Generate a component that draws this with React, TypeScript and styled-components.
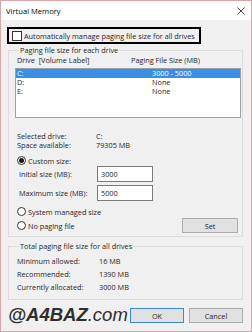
import React from 'react';
import styled, { createGlobalStyle } from 'styled-components';

const GlobalStyle = createGlobalStyle`
  html, body {
    margin: 0;
    padding: 0;
    background: #ffffff;
  }
  * {
    box-sizing: border-box;
  }
`;

const Window = styled.div`
  position: relative;
  width: 252px;
  height: 332px;
  border: 1px solid #d9a4aa;
  display: flex;
  flex-direction: column;
  font-family: 'Open Sans', 'Noto Sans', sans-serif;
  font-size: 7.3px;
  color: #1f1f1f;
  overflow: hidden;
`;

const TitleBar = styled.div`
  height: 19px;
  flex-shrink: 0;
  background: #ffffff;
  display: flex;
  align-items: center;
  justify-content: space-between;
  padding: 0 6px 0 5px;
`;

const Title = styled.span`
  font-size: 7.6px;
  color: #000000;
`;

const Body = styled.div`
  flex: 1;
  background: #f0f0f0;
  padding: 0 8px 0 6px;
  display: flex;
  flex-direction: column;
`;

const HighlightBox = styled.div`
  margin-top: 7px;
  width: 194px;
  height: 17px;
  border: 2px solid #000000;
  display: flex;
  align-items: center;
  gap: 2px;
  padding-left: 3px;
`;

const CheckBox = styled.span`
  width: 10px;
  height: 10px;
  border: 1px solid #333333;
  background: #ffffff;
  flex-shrink: 0;
`;

const Group = styled.fieldset<{ $height: number; $gap: number }>`
  margin: ${(p) => p.$gap}px 0 0 1px;
  padding: 0 1px 0 6px;
  height: ${(p) => p.$height}px;
  border: 1px solid #dcdcdc;
  min-width: 0;
  display: flex;
  flex-direction: column;
`;

const Legend = styled.legend`
  margin-left: 4px;
  padding: 0 1px;
  line-height: 10px;
  height: 10px;
`;

const ColumnHeader = styled.div`
  display: grid;
  grid-template-columns: 114px 1fr;
  height: 10px;
  line-height: 10px;
  padding-left: 2px;
`;

const ListBox = styled.div`
  margin-top: 3px;
  height: 50px;
  border: 1px solid #9a9ea6;
  background: #ffffff;
`;

const ListRow = styled.div<{ $selected?: boolean }>`
  display: grid;
  grid-template-columns: 135px 1fr;
  height: 9px;
  line-height: 9px;
  padding-left: 1px;
  background: ${(p) => (p.$selected ? '#3a8ee6' : 'transparent')};
  color: ${(p) => (p.$selected ? '#ffffff' : '#1f1f1f')};
`;

const InfoGrid = styled.div<{ $label: number; $row: number; $top: number }>`
  display: grid;
  grid-template-columns: ${(p) => p.$label}px 1fr;
  grid-auto-rows: ${(p) => p.$row}px;
  align-items: center;
  margin-top: ${(p) => p.$top}px;
  padding-left: 2px;
`;

const RadioRow = styled.label<{ $top: number }>`
  display: flex;
  align-items: center;
  gap: 2px;
  height: 9px;
  margin-top: ${(p) => p.$top}px;
  padding-left: 2px;
`;

const Radio = styled.span<{ $checked?: boolean }>`
  width: 9px;
  height: 9px;
  border-radius: 50%;
  border: 1px solid #333333;
  background: #ffffff;
  display: flex;
  align-items: center;
  justify-content: center;
  flex-shrink: 0;

  &::after {
    content: '';
    width: 5px;
    height: 5px;
    border-radius: 50%;
    background: ${(p) => (p.$checked ? '#1a1a1a' : 'transparent')};
  }
`;

const SizeRow = styled.div<{ $top: number }>`
  display: grid;
  grid-template-columns: 78px 56px;
  align-items: center;
  height: 16px;
  margin-top: ${(p) => p.$top}px;
  padding-left: 4px;
`;

const TextBox = styled.div`
  height: 16px;
  border: 1px solid #7a7a7a;
  background: #ffffff;
  padding-left: 3px;
  line-height: 14px;
`;

const ActionRow = styled.div`
  display: flex;
  align-items: center;
  justify-content: space-between;
  height: 15px;
  margin-top: 2px;
  padding-right: 3px;
`;

const Button = styled.button<{ $primary?: boolean; $width: number }>`
  width: ${(p) => p.$width}px;
  height: 15px;
  padding: 0;
  font-family: inherit;
  font-size: 7.3px;
  color: #1f1f1f;
  background: #e1e1e1;
  border: 1px solid ${(p) => (p.$primary ? '#3c8ad6' : '#adadad')};
`;

const Footer = styled.div`
  margin-top: 8px;
  display: flex;
  justify-content: flex-end;
  gap: 5px;
`;

const Watermark = styled.div`
  position: absolute;
  left: 7px;
  top: 302px;
  font-family: 'Liberation Sans', Arial, sans-serif;
  font-style: italic;
  font-size: 18.5px;
  line-height: 24px;
  color: #2e2e2e;

  b {
    font-weight: 700;
  }
`;

const CloseIcon = () => (
  <svg width="8" height="8" viewBox="0 0 8 8">
    <path d="M0.5 0.5 L7.5 7.5 M7.5 0.5 L0.5 7.5" stroke="#333" strokeWidth="0.9" fill="none" />
  </svg>
);

const drives = [
  { name: 'C:', size: '3000 - 5000', selected: true },
  { name: 'D:', size: 'None' },
  { name: 'E:', size: 'None' },
];

export default function App() {
  return (
    <>
      <GlobalStyle />
      <Window>
        <TitleBar>
          <Title>Virtual Memory</Title>
          <CloseIcon />
        </TitleBar>
        <Body>
          <HighlightBox>
            <CheckBox />
            <span>Automatically manage paging file size for all drives</span>
          </HighlightBox>

          <Group $height={192} $gap={1}>
            <Legend>Paging file size for each drive</Legend>
            <ColumnHeader>
              <span>Drive&nbsp; [Volume Label]</span>
              <span>Paging File Size (MB)</span>
            </ColumnHeader>
            <ListBox>
              {drives.map((d) => (
                <ListRow key={d.name} $selected={d.selected}>
                  <span>{d.name}</span>
                  <span>{d.size}</span>
                </ListRow>
              ))}
            </ListBox>

            <InfoGrid $label={79} $row={9} $top={13}>
              <span>Selected drive:</span>
              <span>C:</span>
              <span>Space available:</span>
              <span>79305 MB</span>
            </InfoGrid>

            <RadioRow $top={7}>
              <Radio $checked />
              <span>Custom size:</span>
            </RadioRow>
            <SizeRow $top={1}>
              <span>Initial size (MB):</span>
              <TextBox>3000</TextBox>
            </SizeRow>
            <SizeRow $top={3}>
              <span>Maximum size (MB):</span>
              <TextBox>5000</TextBox>
            </SizeRow>

            <RadioRow $top={6}>
              <Radio />
              <span>System managed size</span>
            </RadioRow>
            <ActionRow>
              <RadioRow $top={0}>
                <Radio />
                <span>No paging file</span>
              </RadioRow>
              <Button $width={56}>Set</Button>
            </ActionRow>
          </Group>

          <Group $height={59} $gap={4}>
            <Legend>Total paging file size for all drives</Legend>
            <InfoGrid $label={82} $row={13} $top={3}>
              <span>Minimum allowed:</span>
              <span>16 MB</span>
              <span>Recommended:</span>
              <span>1390 MB</span>
              <span>Currently allocated:</span>
              <span>3000 MB</span>
            </InfoGrid>
          </Group>

          <Footer>
            <Button $primary $width={54}>OK</Button>
            <Button $width={54}>Cancel</Button>
          </Footer>
        </Body>
        <Watermark>
          <b>@A4BAZ</b>.com
        </Watermark>
      </Window>
    </>
  );
}
